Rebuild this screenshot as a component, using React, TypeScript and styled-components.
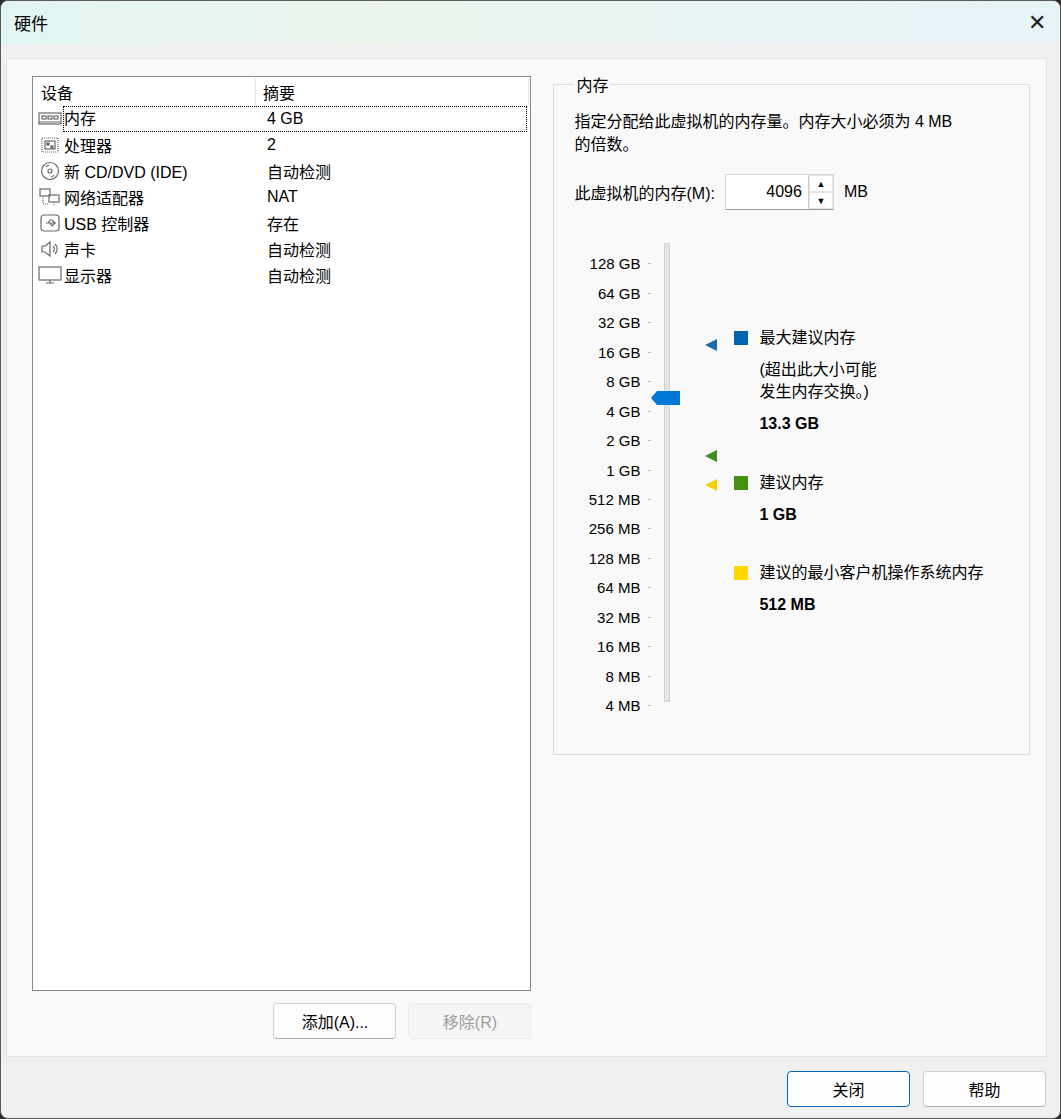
import React from "react";
import styled, { createGlobalStyle } from "styled-components";

const Global = createGlobalStyle`
  html, body { margin: 0; padding: 0; background: #2b2b2b; }
  body { font-family: "Liberation Sans", "Noto Sans CJK SC", sans-serif; font-size: 16px; color: #000; }
`;

const Win = styled.div`
  width: 1061px; height: 1119px; box-sizing: border-box;
  border-radius: 8px; overflow: hidden; background: #f0f0f0;
  border: 1px solid #5a5a5a; display: flex; flex-direction: column;
`;
const TitleBar = styled.div`
  height: 43px; flex: none; display: flex; align-items: center; justify-content: space-between;
  padding: 0 14px 0 13px; background: linear-gradient(90deg, #e2f5f4, #ebf5ec 35%, #e8f4f5 70%, #e6f3f7);
`;
const Title = styled.span` font-size: 17px; `;
const Close = styled.span` font-size: 22px; font-weight: 300; color: #222; font-family: "DejaVu Sans", sans-serif; `;

const Panel = styled.div`
  margin: 14px 13px 0 5px; height: 999px; box-sizing: border-box; background: #f9f9f9;
  border: 1px solid #e2e2e2; display: flex; padding: 17px 16px 0 25px; gap: 22px;
`;
const LeftCol = styled.div` width: 500px; display: flex; flex-direction: column; `;
const ListBox = styled.div`
  height: 915px; box-sizing: border-box; background: #fff; border: 1px solid #828790; padding: 1px;
`;
const HeaderRow = styled.div` display: flex; height: 28px; align-items: center; `;
const HeadCell = styled.div<{ $w?: number }>`
  ${p => p.$w ? `width:${p.$w}px;` : "flex:1;"} box-sizing: border-box; padding-left: 7px; height: 100%;
  display: flex; align-items: center; border-right: 1px solid #e5e5e5; color: #000;
`;
const Row = styled.div<{ $sel?: boolean }>` display: flex; height: 26px; align-items: center; `;
const DevCell = styled.div` width: 221px; display: flex; align-items: center; gap: 2px; padding-left: 4px; `;
const DevName = styled.span<{ $focus?: boolean }>`
  ${p => p.$focus ? "outline: 1px dotted #000; outline-offset: 0; width: 462px; margin-right:-270px; height:24px; line-height:24px;" : ""}
`;
const SumCell = styled.div` padding-left: 8px; `;
const BtnRow = styled.div` display: flex; justify-content: flex-end; gap: 12px; margin-top: 12px; `;
const Btn = styled.button<{ $dis?: boolean; $primary?: boolean }>`
  width: 123px; height: 36px; font: inherit; font-size: 16px; border-radius: 4px;
  background: ${p => p.$dis ? "#f5f5f5" : "#fdfdfd"};
  color: ${p => p.$dis ? "#9d9d9d" : "#000"};
  border: 1px solid ${p => p.$primary ? "#0067c0" : p.$dis ? "#ececec" : "#d0d0d0"};
  ${p => !p.$dis && !p.$primary ? "border-bottom-color:#b0b0b0;" : ""}
`;

const Group = styled.fieldset`
  margin: 0; width: 477px; height: 683px; box-sizing: border-box; border: 1px solid #dcdcdc;
  padding: 14px 20px 0 20px; position: relative; top: -4px;
`;
const Legend = styled.legend` padding: 0 2px; margin-left: 0px; font-size: 16px; `;
const Desc = styled.div` line-height: 23px; margin-top: 0; `;
const MemRow = styled.div` display: flex; align-items: center; margin-top: 18px; gap: 10px; `;
const Spin = styled.div`
  display: flex; width: 109px; height: 36px; box-sizing: border-box; background: #fff;
  border: 1px solid #d8d8d8; border-bottom-color: #9a9a9a; margin-left: 0px;
`;
const SpinVal = styled.div` flex: 1; text-align: right; padding-right: 6px; line-height: 34px; `;
const SpinBtns = styled.div` width: 24px; display: flex; flex-direction: column; border-left: 1px solid #ccc; `;
const SpinB = styled.div` flex: 1; display: flex; align-items: center; justify-content: center; border: 1px solid #e6e6e6; font-size: 9px; `;

const Chart = styled.div` position: relative; height: 470px; margin-top: 33px; `;
const Ticks = styled.div`
  position: absolute; left: 0; top: 6px; width: 77px; display: flex; flex-direction: column; gap: 0;
`;
const Tick = styled.div`
  height: 29.47px; display: flex; align-items: center; justify-content: flex-end; font-size: 15px; gap: 8px;
  &::after { content: ""; width: 3px; height: 1px; background: #bbb; }
`;
const Track = styled.div`
  position: absolute; left: 90px; top: 0; width: 6px; height: 459px; background: #e4e4e4; border: 1px solid #d2d2d2; box-sizing: border-box;
`;
const Abs = styled.div<{ $x: number; $y: number }>` position: absolute; left: ${p => p.$x}px; top: ${p => p.$y}px; `;
const Sq = styled.div<{ $c: string }>` width: 14px; height: 14px; background: ${p => p.$c}; `;
const LegItem = styled.div` display: flex; gap: 11px; align-items: flex-start; `;
const LegText = styled.div` line-height: 22px; margin-top: -4px; `;
const Bold = styled.div` font-weight: bold; margin-top: 10px; `;

const Footer = styled.div` display: flex; justify-content: flex-end; gap: 13px; padding: 14px 14px 0 0; `;

const Tri = ({ c }: { c: string }) => (
  <svg width="14" height="14" viewBox="0 0 14 14"><path d="M1 7 L13 1 L13 13 Z" fill={c} /></svg>
);

const I = (d: React.ReactNode) => (
  <svg width="24" height="20" viewBox="0 0 24 20" fill="none" stroke="#6a6a6a" strokeWidth="1.2">{d}</svg>
);
const icons = [
  I(<><rect x="1" y="4" width="22" height="11" /><rect x="4" y="7" width="4" height="3" /><rect x="10" y="7" width="4" height="3" /><rect x="16" y="7" width="4" height="3" /><path d="M1 13h22" /></>),
  I(<><rect x="4" y="3" width="16" height="14" strokeDasharray="1 1" /><rect x="7" y="6" width="10" height="8" /><rect x="9" y="8" width="2" height="2" fill="#555" /><rect x="13" y="11" width="2" height="2" fill="#555" /></>),
  I(<><circle cx="12" cy="10" r="8.5" /><circle cx="12" cy="10" r="2" /><path d="M8 6a5 5 0 0 1 3-2M16 14a5 5 0 0 1-3 2" /></>),
  I(<><rect x="2" y="2" width="10" height="7" /><rect x="11" y="8" width="10" height="7" /><path d="M5 9v8h6M16 15v3" strokeDasharray="1 1" /></>),
  I(<><rect x="3" y="2" width="18" height="16" rx="3" /><path d="M8 10h10M14 7l3 3-3 3M10 10l2-3h2M12 10l2 3" /></>),
  I(<><path d="M4 7h3l5-4v14l-5-4H4z" /><path d="M15 7a4 4 0 0 1 0 6M17 5a7 7 0 0 1 0 10" /></>),
  I(<><rect x="1" y="2" width="22" height="13" /><path d="M8 18h8M12 15v3" /></>),
];

const devices = [
  ["内存", "4 GB"], ["处理器", "2"], ["新 CD/DVD (IDE)", "自动检测"], ["网络适配器", "NAT"],
  ["USB 控制器", "存在"], ["声卡", "自动检测"], ["显示器", "自动检测"],
];
const ticks = ["128 GB","64 GB","32 GB","16 GB","8 GB","4 GB","2 GB","1 GB","512 MB","256 MB","128 MB","64 MB","32 MB","16 MB","8 MB","4 MB"];

export default function App() {
  return (
    <Win>
      <Global />
      <TitleBar><Title>硬件</Title><Close>✕</Close></TitleBar>
      <Panel>
        <LeftCol>
          <ListBox>
            <HeaderRow><HeadCell $w={222}>设备</HeadCell><HeadCell>摘要</HeadCell></HeaderRow>
            {devices.map(([n, s], i) => (
              <Row key={n}>
                <DevCell>{icons[i]}<DevName $focus={i === 0}>{n}</DevName></DevCell>
                <SumCell>{s}</SumCell>
              </Row>
            ))}
          </ListBox>
          <BtnRow><Btn>添加(A)...</Btn><Btn $dis>移除(R)</Btn></BtnRow>
        </LeftCol>
        <Group>
          <Legend>内存</Legend>
          <Desc>指定分配给此虚拟机的内存量。内存大小必须为 4 MB<br />的倍数。</Desc>
          <MemRow>
            <span>此虚拟机的内存(M):</span>
            <Spin><SpinVal>4096</SpinVal><SpinBtns><SpinB>▲</SpinB><SpinB>▼</SpinB></SpinBtns></Spin>
            <span>MB</span>
          </MemRow>
          <Chart>
            <Ticks>{ticks.map(t => <Tick key={t}>{t}</Tick>)}</Ticks>
            <Track />
            <Abs $x={77} $y={147}>
              <svg width="30" height="16" viewBox="0 0 30 16"><path d="M0 8 L6 1 H29 V15 H6 Z" fill="#0078d7" /></svg>
            </Abs>
            <Abs $x={130} $y={95}><Tri c="#1e6aa8" /></Abs>
            <Abs $x={130} $y={206}><Tri c="#3f8f1f" /></Abs>
            <Abs $x={130} $y={235}><Tri c="#f5d000" /></Abs>
            <Abs $x={160} $y={88}>
              <LegItem><Sq $c="#0063b1" /><LegText>最大建议内存<div style={{ marginTop: 10 }}>(超出此大小可能<br />发生内存交换。)</div><Bold>13.3 GB</Bold></LegText></LegItem>
            </Abs>
            <Abs $x={160} $y={233}>
              <LegItem><Sq $c="#45900f" /><LegText>建议内存<Bold>1 GB</Bold></LegText></LegItem>
            </Abs>
            <Abs $x={160} $y={323}>
              <LegItem><Sq $c="#ffd800" /><LegText>建议的最小客户机操作系统内存<Bold>512 MB</Bold></LegText></LegItem>
            </Abs>
          </Chart>
        </Group>
      </Panel>
      <Footer><Btn $primary>关闭</Btn><Btn>帮助</Btn></Footer>
    </Win>
  );
}
